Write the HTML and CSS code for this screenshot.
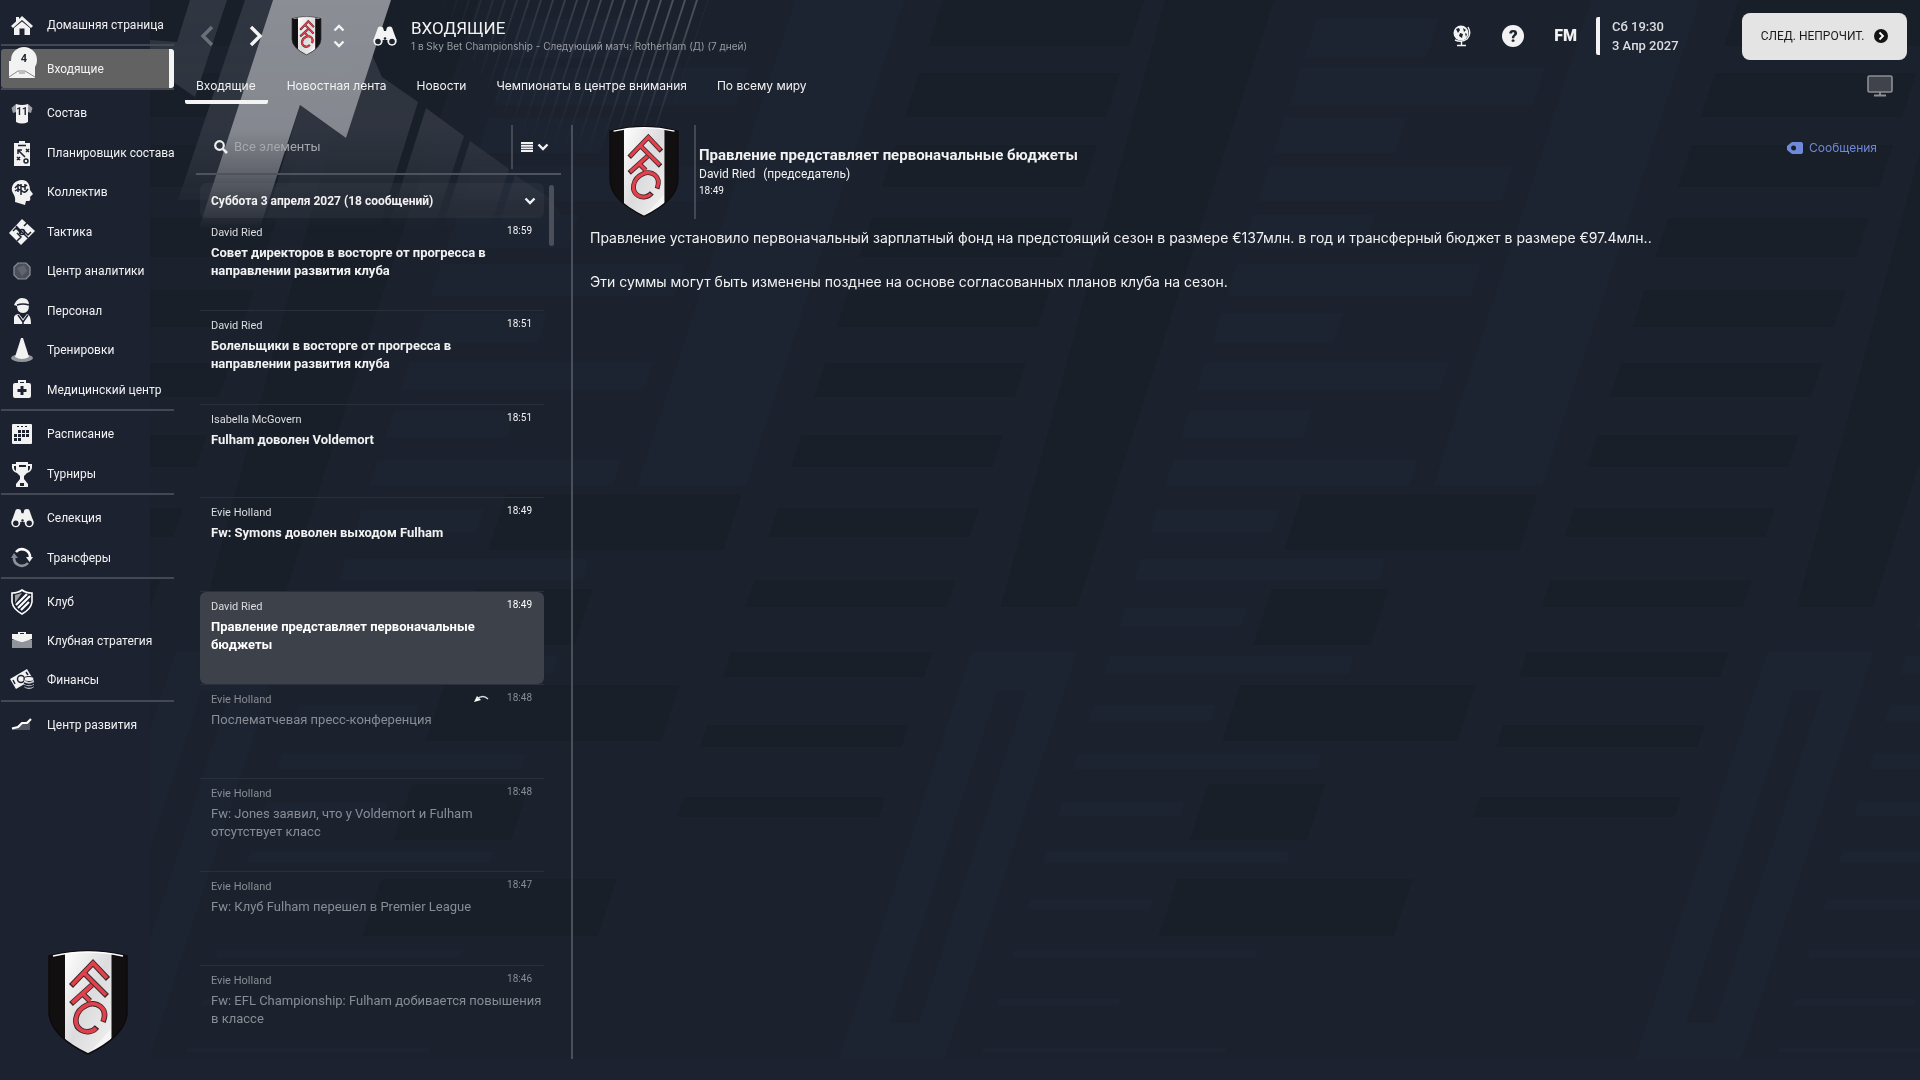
FILE: index.html
```html
<!DOCTYPE html>
<html lang="ru">
<head>
<meta charset="utf-8">
<title>Входящие</title>
<link rel="stylesheet" href="styles.css">
</head>
<body>
<svg class="backdrop" viewBox="0 0 1920 1080" preserveAspectRatio="xMinYMin slice" aria-hidden="true">
  <defs>
    <clipPath id="patternArea"><rect x="150" y="0" width="1770" height="1060"/></clipPath>
    <linearGradient id="fadeDown" x1="0" y1="0" x2="0" y2="240" gradientUnits="userSpaceOnUse">
      <stop offset="0" stop-color="#fff"/><stop offset=".54" stop-color="#fff" stop-opacity=".95"/><stop offset=".72" stop-color="#fff" stop-opacity=".62"/><stop offset=".83" stop-color="#fff" stop-opacity=".28"/><stop offset=".96" stop-color="#fff" stop-opacity="0"/>
    </linearGradient>
    <linearGradient id="lineFade" x1="430" y1="0" x2="640" y2="-60" gradientUnits="userSpaceOnUse">
      <stop offset="0" stop-color="#000"/><stop offset="1" stop-color="#fff"/>
    </linearGradient>
    <linearGradient id="lineDown" x1="0" y1="0" x2="0" y2="160" gradientUnits="userSpaceOnUse">
      <stop offset="0" stop-color="#fff" stop-opacity=".22"/><stop offset="1" stop-color="#fff" stop-opacity="0"/>
    </linearGradient>
    <mask id="fade" maskUnits="userSpaceOnUse" x="0" y="0" width="1920" height="240"><rect width="1920" height="240" fill="url(#fadeDown)"/></mask>
    <mask id="fadeLeft" maskUnits="userSpaceOnUse" x="380" y="0" width="400" height="240"><rect x="380" width="400" height="240" fill="url(#lineFade)"/></mask>
    <pattern id="thinLines" width="12" height="240" patternUnits="userSpaceOnUse"><rect width="2" height="240" fill="url(#lineDown)"/></pattern>
    <g id="tile">
      <g class="shade">
        <path d="M943 0h201v46h-201zM943 73h201v44h-201zM943 145h201v42h-201zM943 218h201v39h-201zM943 290h201v37h-201zM943 363h201v34h-201zM943 435h201v32h-201zM943 508h201v29h-201zM943 580h201v27h-201zM943 652h201v25h-201zM943 725h201v22h-201zM943 797h201v20h-201z"/>
        <path d="M1165 0H1274V607H1198z"/>
        <path d="M1463 494h235v56h-235zM1463 589h117v56h-117zM1463 685h235v56h-235zM1463 784h117v56h-117zM1463 879h235v57h-235z"/>
      </g>
      <g class="tint">
        <path d="M795 0h109v485h-109z"/>
        <path fill-rule="evenodd" d="M1183 652h106v408h-106zM1222 691v332h29v-332z"/>
        <path d="M1323 19h122v39h-122zM1323 68h244v38h-244zM1323 117h122v36h-122zM1323 166h244v35h-244zM1323 215h122v33h-122zM1323 264h244v32h-244zM1323 313h122v30h-122zM1323 362h244v28h-244zM1323 411h122v26h-122zM1323 460h244v25h-244zM1323 509h122v23h-122zM1323 559h244v21h-244zM1323 608h122v19h-122zM1323 656h244v18h-244zM1323 705h122v17h-122zM1323 754h244v15h-244zM1323 803h122v13h-122zM1323 852h244v11h-244zM1323 900h122v9h-122zM1323 950h244v7h-244zM1323 999h122v6h-122zM1323 1048h244v4h-244z"/>
      </g>
    </g>
    <symbol id="crest" viewBox="-2 -2 82 108">
      <clipPath id="shieldClip"><path d="M0 5Q39-5 78 5V61Q78 84 39 103Q0 84 0 61Z"/></clipPath>
      <linearGradient id="silver" x1="0" y1="0" x2="1" y2="1"><stop offset="0" stop-color="#fff"/><stop offset=".5" stop-color="#dcdcde"/><stop offset="1" stop-color="#f2f2f2"/></linearGradient>
      <g clip-path="url(#shieldClip)">
        <rect width="78" height="104" fill="#120f11"/>
        <rect x="16" width="46.500" height="104" fill="url(#silver)"/>
        <path d="M39 103L62 90V78Z" fill="#fff" opacity=".5"/>
      </g>
      <path d="M0 5Q39-5 78 5V61Q78 84 39 103Q0 84 0 61Z" fill="none" stroke="#0d0b0d" stroke-width="1.500"/>
      <path d="M4 5Q39-3 74 5" fill="none" stroke="#fff" stroke-width="1.500"/>
      <g fill="none" stroke-linejoin="miter">
        <path stroke="#3a2529" stroke-width="5.600" d="M22 35L44 12L59 28M35 22L58 45M22 53L43 34M34 43L41 50M54 71C60 56 46 50 38 54C25 60 24 74 32 79C37 82 44 81 48 76"/>
        <path stroke="#e0414a" stroke-width="3.800" d="M23 34L44 12L58 27M35 22L57 44M23 52L43 34M34 43L41 50M54 70C60 56 46 50 38 54C25 60 24 74 32 79C37 82 44 81 47 77"/>
      </g>
    </symbol>
    <symbol id="binoculars" viewBox="0 0 24 20">
      <path d="M5 1.500Q7-.5 10 1.500L11 5h2l1-3.500Q17-.5 19 1.500L23.500 14H.5Z"/><circle cx="5" cy="15" r="4.700"/><circle cx="19" cy="15" r="4.700"/><path d="M9 8h6v6H9z"/>
      <circle class="hole" cx="5" cy="15.500" r="2.800"/><circle class="hole" cx="19" cy="15.500" r="2.800"/><circle class="hole" cx="12" cy="12.500" r="1.300"/>
    </symbol>
    <symbol id="chevron" viewBox="0 0 12 8"><path d="M1.500 1.500L6 6L10.500 1.500" fill="none" stroke="currentColor" stroke-width="2.400"/></symbol>
  </defs>
  <g clip-path="url(#patternArea)">
    <rect class="base" x="150" y="0" width="1770" height="1060"/>
    <g transform="skewX(-18)">
      <use href="#tile" x="-796"/><use href="#tile"/><use href="#tile" x="796"/>
    </g>
    <g mask="url(#fade)">
      <g class="band">
        <path d="M190 0H227L195 97L150 66V40L177 42Z"/>
        <path d="M245 0H273L210 200H178Z"/>
        <path d="M370 50L382 77L418 102L375 240H260L300 105L346 138Z"/>
        <path d="M426 108L464 136L430 240H384Z"/><path d="M470 141L509 169L486 240H438Z"/><path d="M515 175L548 197L562 215L540 240H494Z"/>
      </g>
      <path class="beam" d="M273 0H391L346 138L300 105L256 240H195Z"/>
    </g>
    <g mask="url(#fadeLeft)"><g transform="skewX(-18)"><path d="M440 0H708V160H580Z" fill="url(#thinLines)"/></g></g>
  </g>
</svg>

<div class="app">
  <aside class="sidebar">
    <nav class="nav" aria-label="Главное меню">
      <div class="nav-group nav-home">
        <a class="nav-item" href="#"><svg class="nav-icon" viewBox="0 0 26 26"><path d="M13 4L24 14L22 16L13 8L4 16L2 14L7 9.500V5h3v2Z"/><path d="M5 16L13 9.500L21 16V23H15.500V16.500H10.500V23H5Z"/></svg><span>Домашняя страница</span></a>
      </div>
      <div class="nav-group">
        <a class="nav-item active" href="#"><svg class="nav-icon mail" viewBox="0 0 26 32"><path d="M0 14H26V31H0Z"/><circle cx="15" cy="13" r="13"/><path d="M0 30L9 24H16L26 30M10 26H16" fill="none" stroke="#888" stroke-width="1"/><text x="15" y="15" text-anchor="middle">4</text></svg><span>Входящие</span></a>
      </div>
      <div class="nav-group squad">
        <a class="nav-item" href="#"><svg class="nav-icon" viewBox="0 0 26 26"><path d="M7 4L2.500 8L4 13L7 12ZM19 4L23.500 8L22 13L19 12Z" opacity=".6"/><path d="M7 4Q13 6 19 4V22Q13 25 7 22Z"/><text class="number" x="13" y="15" text-anchor="middle">11</text></svg><span>Состав</span></a>
        <a class="nav-item" href="#"><svg class="nav-icon" viewBox="0 0 26 26"><path d="M5 3h5V1h6v2h5v23H5z"/><path class="ink" d="M9 5.500h8M9 10l7 7M9 14v-4h4M17 9l3 3M20 9l-3 3M8 17l3 3M11 17l-3 3"/><circle class="ink" cx="17" cy="21" r="2"/></svg><span>Планировщик состава</span></a>
        <a class="nav-item" href="#"><svg class="nav-icon" viewBox="0 0 26 26"><path d="M13 1C6 1 2 6 3 12C4 15 7 17 6 23L16 26L17 22H20Q22 21 21 18L24 15L21 11C21 5 18 1 13 1Z"/><path class="ink" d="M6 9q3-4 6-2t6-1M6 12q4-3 7 0t6-2M12 5v11M16 5v6M9 5v8"/></svg><span>Коллектив</span></a>
        <a class="nav-item" href="#"><svg class="nav-icon" viewBox="0 0 26 26"><path d="M13 0L26 12L12 26L0 14Z"/><path class="ink" d="M7 7L19 19M4 12l3-3l5 5M11 19l-3 3M22 13l-3 3l-5-5M15 7l3-3M9 21l3-3l-4-4"/><circle class="ink" cx="13" cy="13" r="2.500"/></svg><span>Тактика</span></a>
        <a class="nav-item" href="#"><svg class="nav-icon" viewBox="0 0 26 26"><path d="M9 5H17L21 9V17L17 21H9L5 17V9Z" fill="#4b505b" stroke="#8d9097" stroke-width="1.200"/><path d="M8 10L15 7L18 13L13 18Z" fill="#5f646e"/></svg><span>Центр аналитики</span></a>
        <a class="nav-item" href="#"><svg class="nav-icon" viewBox="0 0 26 26"><path d="M6 5Q9 0 13 0Q20 0 20 7Q20 15 14 15Q8 15 8 8L5 7Z"/><path d="M5 26V19Q6 16 10 16L14 21L18 16Q22 17 22 26Z"/><path class="ink" d="M8 7q6-2 12 0M9 17l5 7l5-7M14 24v2"/></svg><span>Персонал</span></a>
        <a class="nav-item" href="#"><svg class="nav-icon" viewBox="0 0 26 26"><ellipse cx="13" cy="21" rx="11" ry="4" opacity=".55"/><path d="M12 1H14L20 20Q13 24 6 20Z"/></svg><span>Тренировки</span></a>
        <a class="nav-item" href="#"><svg class="nav-icon" viewBox="0 0 26 26"><path fill-rule="evenodd" d="M9 6V3H17V6H20Q22 6 22 8V19Q22 21 20 21H6Q4 21 4 19V8Q4 6 6 6ZM11 6H15V5H11ZM11.500 9V12H8.500V15H11.500V18H14.500V15H17.500V12H14.500V9Z"/></svg><span>Медицинский центр</span></a>
      </div>
      <div class="nav-group pair">
        <a class="nav-item" href="#"><svg class="nav-icon" viewBox="0 0 26 26"><rect x="3" y="3" width="20" height="20" rx="1"/><path class="hole" d="M8 5h2v1H8zM12 5h2v1h-2zM16 5h2v1h-2zM9 9h3v3H9zM13 9h3v3h-3zM17 9h3v3h-3zM5 13h3v3H5zM9 13h3v3H9zM13 13h3v3h-3zM17 13h3v3h-3zM5 17h3v3H5zM9 17h3v3H9z"/></svg><span>Расписание</span></a>
        <a class="nav-item" href="#"><svg class="nav-icon" viewBox="0 0 26 26"><path fill-rule="evenodd" d="M7 1H19V3H23V7Q22 11 18 12L15 15V18L19 23V26H7V23L11 18V15L8 12Q4 11 3 7V3H7ZM5 5V7Q5 9 7 10V5ZM21 5V7Q21 9 19 10V5ZM10 4V6H17V4ZM11 22V25H15V22Z"/></svg><span>Турниры</span></a>
      </div>
      <div class="nav-group pair">
        <a class="nav-item" href="#"><svg class="nav-icon" viewBox="0 0 26 26"><use href="#binoculars" x="2" y="3" width="23" height="20"/></svg><span>Селекция</span></a>
        <a class="nav-item" href="#"><svg class="nav-icon" viewBox="0 0 26 26"><path d="M7 7A8 8 0 0 1 21 13" fill="none" stroke="#fff" stroke-width="2.600"/><path d="M17 12H24L20.500 17Z"/><g opacity=".5"><path d="M19 18A8 8 0 0 1 5 12" fill="none" stroke="#fff" stroke-width="2.600"/><path d="M2 13H9L5 8Z"/></g></svg><span>Трансферы</span></a>
      </div>
      <div class="nav-group trio">
        <a class="nav-item" href="#"><svg class="nav-icon" viewBox="0 0 26 26"><path d="M3 4Q9 4 13 1Q17 4 23 4V13Q22 20 13 25Q4 20 3 13Z" fill="none" stroke="#fff" stroke-width="1.600"/><path d="M6 6L13 4L6 14Z" opacity=".6"/><path d="M7 16L18 5M9 19L21 7M12 21L20 13" stroke="#fff" stroke-width="2.200"/></svg><span>Клуб</span></a>
        <a class="nav-item" href="#"><svg class="nav-icon" viewBox="0 0 26 26"><path d="M3 12H23V20H3Z" opacity=".55"/><path fill-rule="evenodd" d="M9 6V4H17V6H23V11L14 14H12L3 11V6ZM11 6H15V5H11Z"/></svg><span>Клубная стратегия</span></a>
        <a class="nav-item" href="#"><svg class="nav-icon" viewBox="0 0 26 26"><path d="M1 12L18 2L24 12L7 22Z"/><circle class="ink" cx="12" cy="12" r="3.500"/><path class="ink" d="M4 13l2 4M17 5l2 3"/><ellipse cx="20" cy="12" rx="5" ry="2.500" stroke="#1c2230"/><path d="M15 13Q20 17 25 13V20Q20 24 15 20Z" opacity=".8"/><path class="ink" d="M15 16q5 3 10 0M15 18.500q5 3 10 0"/></svg><span>Финансы</span></a>
      </div>
      <div class="nav-group">
        <a class="nav-item" href="#"><svg class="nav-icon" viewBox="0 0 26 26"><path d="M3 17L9 16L14 11L21 8V18H3Z" opacity=".25"/><path d="M3 16.500L9 15L13 11L18 11L22 7" fill="none" stroke="#fff" stroke-width="2.200"/></svg><span>Центр развития</span></a>
      </div>
    </nav>
    <svg class="club-crest" role="img" aria-label="Fulham"><use href="#crest"/></svg>
  </aside>

  <div class="page">
    <header class="topbar">
      <div class="history">
        <button class="icon-btn faded" aria-label="Назад"><svg width="14" height="22" viewBox="0 0 14 22"><path d="M12 2L3 11L12 20" fill="none" stroke="currentColor" stroke-width="3.400"/></svg></button>
        <button class="icon-btn" aria-label="Вперёд"><svg width="14" height="22" viewBox="0 0 14 22"><path d="M2 2L11 11L2 20" fill="none" stroke="currentColor" stroke-width="3.400"/></svg></button>
      </div>
      <svg class="mini-crest" role="img" aria-label="Fulham"><use href="#crest"/></svg>
      <div class="switcher">
        <button class="icon-btn" aria-label="Предыдущий"><svg class="flip" width="12" height="8"><use href="#chevron"/></svg></button>
        <button class="icon-btn" aria-label="Следующий"><svg width="12" height="8"><use href="#chevron"/></svg></button>
      </div>
      <button class="icon-btn scout" aria-label="Поиск"><svg width="24" height="20"><use href="#binoculars"/></svg></button>
      <div class="heading">
        <h1>ВХОДЯЩИЕ</h1>
        <p>1 в Sky Bet Championship - Следующий матч: Rotherham (Д) (7 дней)</p>
      </div>
      <div class="tools">
        <button class="icon-btn" aria-label="Мир"><svg width="20" height="22" viewBox="0 0 20 22"><circle cx="9" cy="8" r="7.500"/><path d="M16 2Q20 9 15 14Q10 18 3 15M9.500 16V20M5 20.500H14" fill="none" stroke="currentColor" stroke-width="1.400"/><path class="hole" d="M4 4l3-1l1 2l-2 3zM11 3l3 2l-2 2zM8 8l3 1l-1 4l-3-2zM13 8l2 1l-1 3z"/></svg></button>
        <button class="help" aria-label="Справка">?</button>
        <button class="fm">FM</button>
      </div>
      <div class="clock"><span>Сб 19:30</span><span>3 Апр 2027</span></div>
      <button class="next">СЛЕД. НЕПРОЧИТ.<svg width="14" height="14" viewBox="0 0 14 14"><circle cx="7" cy="7" r="7" fill="#141414"/><path d="M5.500 3.500L9 7L5.500 10.500" fill="none" stroke="#fff" stroke-width="1.800"/></svg></button>
    </header>

    <div class="tabbar">
      <nav class="tabs" aria-label="Разделы">
        <a class="tab current" href="#">Входящие</a>
        <a class="tab" href="#">Новостная лента</a>
        <a class="tab" href="#">Новости</a>
        <a class="tab" href="#">Чемпионаты в центре внимания</a>
        <a class="tab" href="#">По всему миру</a>
      </nav>
      <button class="icon-btn" aria-label="Экран"><svg width="26" height="22" viewBox="0 0 26 22"><rect x="1" y="1" width="24" height="16" rx="1.500" fill="#3f434c" stroke="#8d8f93" stroke-width="1.600"/><path d="M13 17V20M7 20.500H19" stroke="#8d8f93" stroke-width="1.800"/></svg></button>
    </div>

    <main class="content">
      <section class="inbox" aria-label="Список сообщений">
        <div class="search">
          <label for="q" aria-label="Поиск сообщений"><svg width="14" height="14" viewBox="0 0 14 14"><circle cx="5.500" cy="5.500" r="4.300" fill="none" stroke="#eee" stroke-width="2.200"/><path d="M8.800 8.800L13 13" stroke="#eee" stroke-width="2.600"/></svg></label>
          <input id="q" type="text" placeholder="Все элементы">
          <button class="filter" aria-label="Фильтр"><svg width="12" height="10" viewBox="0 0 12 10"><path d="M0 1H12M0 3.700H12M0 6.400H12M0 9H12" stroke="currentColor" stroke-width="1.900"/></svg><svg width="12" height="8"><use href="#chevron"/></svg></button>
        </div>
        <div class="scroller">
          <div class="feed">
            <button class="day"><span>Суббота 3 апреля 2027 (18 сообщений)</span><svg width="12" height="8"><use href="#chevron"/></svg></button>
            <ul class="messages">
              <li><a class="msg" href="#"><span class="from">David Ried</span><time>18:59</time><strong>Совет директоров в восторге от прогресса в направлении развития клуба</strong></a></li>
              <li><a class="msg" href="#"><span class="from">David Ried</span><time>18:51</time><strong>Болельщики в восторге от прогресса в направлении развития клуба</strong></a></li>
              <li><a class="msg" href="#"><span class="from">Isabella McGovern</span><time>18:51</time><strong>Fulham доволен Voldemort</strong></a></li>
              <li><a class="msg" href="#"><span class="from">Evie Holland</span><time>18:49</time><strong>Fw: Symons доволен выходом Fulham</strong></a></li>
              <li><a class="msg selected" href="#"><span class="from">David Ried</span><time>18:49</time><strong>Правление представляет первоначальные бюджеты</strong></a></li>
              <li><a class="msg read" href="#"><span class="from">Evie Holland</span><svg class="reply" width="16" height="8" viewBox="0 0 16 8"><path d="M0 7L3 1L7 5Z" fill="#fff"/><path d="M3 4Q9-1 14 4" fill="none" stroke="#ddd" stroke-width="1.500"/></svg><time>18:48</time><strong>Послематчевая пресс-конференция</strong></a></li>
              <li><a class="msg read" href="#"><span class="from">Evie Holland</span><time>18:48</time><strong>Fw: Jones заявил, что у Voldemort и Fulham отсутствует класс</strong></a></li>
              <li><a class="msg read" href="#"><span class="from">Evie Holland</span><time>18:47</time><strong>Fw: Клуб Fulham перешел в Premier League</strong></a></li>
              <li><a class="msg read" href="#"><span class="from">Evie Holland</span><time>18:46</time><strong>Fw: EFL Championship: Fulham добивается повышения в классе</strong></a></li>
            </ul>
          </div>
          <div class="scrollbar"></div>
        </div>
      </section>

      <article class="reader">
        <header class="mail-head">
          <svg class="mail-crest" role="img" aria-label="Fulham"><use href="#crest"/></svg>
          <div class="mail-meta">
            <h2>Правление представляет первоначальные бюджеты</h2>
            <p class="author"><span>David Ried</span><span>(председатель)</span></p>
            <time>18:49</time>
          </div>
          <a class="tag" href="#"><svg width="16" height="12" viewBox="0 0 16 12"><path fill-rule="evenodd" d="M5 0H14Q16 0 16 2V10Q16 12 14 12H5L0 8V4ZM6.500 3.500A2.500 2.500 0 1 0 6.600 8.500A2.500 2.500 0 1 0 6.500 3.500Z"/></svg>Сообщения</a>
        </header>
        <div class="mail-body">
          <p>Правление установило первоначальный зарплатный фонд на предстоящий сезон в размере €137млн. в год и трансферный бюджет в размере €97.4млн..</p>
          <p>Эти суммы могут быть изменены позднее на основе согласованных планов клуба на сезон.</p>
        </div>
      </article>
    </main>
  </div>
</div>
</body>
</html>
```
FILE: styles.css
```css
* { box-sizing: border-box; }

body {
  margin: 0;
  min-height: 100vh;
  background: #1c2230;
  color: #f2f2f3;
  font-family: Roboto, "Noto Sans", sans-serif;
  font-size: 13px;
  line-height: 18px;
}

h1, h2, p, ul { margin: 0; padding: 0; }
ul { list-style: none; }
a { color: inherit; text-decoration: none; }
button { border: 0; padding: 0; background: none; color: inherit; font: inherit; cursor: pointer; }
svg { display: block; fill: currentColor; flex: none; }

.backdrop { position: fixed; inset: 0; width: 100%; height: 100%; z-index: -1; }
.base { fill: #1c222d; }
.shade { fill: #191f29; }
.tint { fill: #1d2431; }
.band { fill: #303641; }
.beam { fill: #8b8e95; }
.hole { fill: #1c2230; }
.ink { fill: none; stroke: #1c2230; stroke-width: 1.5px; }

.app { display: flex; min-height: 100vh; }

/* Sidebar */
.sidebar {
  display: flex;
  flex-direction: column;
  justify-content: space-between;
  flex: none;
  width: 175px;
  padding: 5px 0 23px 1px;
}
.nav-group { display: grid; grid-auto-rows: 1fr; margin-right: 1px; padding-top: 3px; border-top: 2px solid #434853; }
.nav-home { padding-top: 0; border-top: 0; }
.squad { height: 321px; }
.pair { height: 84px; }
.trio { height: 123px; }
.nav-item { display: flex; align-items: center; gap: 12px; min-height: 39px; padding-left: 8px; font-size: 12px; white-space: nowrap; }
.squad .nav-item, .pair .nav-item { padding-top: 1px; }
.nav-icon { width: 26px; height: 26px; overflow: visible; }
.nav-icon text { fill: #1c2230; font-size: 11px; font-weight: 700; }
.nav-icon .number { font-size: 10px; }
.mail { height: 32px; margin-top: -12px; }
.active { height: 39px; background: #626262; border-right: 5px solid #f4f4f4; border-radius: 3px; }
.club-crest { width: 82px; height: 108px; margin-left: 46px; }

/* Top bar */
.page { display: flex; flex-direction: column; flex: 1; min-width: 0; padding: 0 13px 21px 10px; }
.topbar { display: flex; align-items: center; height: 72px; }
.icon-btn { display: block; color: #f4f4f4; }
.faded { color: #6b6f78; }
.history { display: flex; gap: 35px; padding-left: 15px; }
.mini-crest { width: 31px; height: 40px; margin-left: 28px; }
.switcher { display: grid; gap: 8px; margin-left: 11px; }
.flip { transform: rotate(180deg); }
.scout { margin-left: 28px; }
.heading { flex: 1; padding-left: 14px; }
h1 { font-size: 17px; line-height: 20px; font-weight: 400; }
.heading p { color: #999da4; font: 10px/16px Inter, Roboto, sans-serif; }
.tools { display: flex; align-items: center; gap: 30px; }
.help { width: 22px; height: 22px; border-radius: 50%; background: #f2f2f2; color: #1c2230; font-size: 17px; font-weight: 900; line-height: 22px; }
.fm { font-size: 16px; font-weight: 900; }
.clock { display: grid; width: 146px; margin-left: 19px; padding-left: 12px; border-left: 4px solid #f4f4f4; border-radius: 2px; color: #dcdde0; font-size: 13px; font-weight: 500; line-height: 19px; }
.next { display: flex; align-items: center; justify-content: center; gap: 10px; width: 165px; height: 47px; border-radius: 8px; background: #e4e4e4; color: #1a1a1a; font-size: 12px; }

/* Tabs */
.tabbar { display: flex; align-items: flex-start; justify-content: space-between; height: 32px; padding: 0 14px 0 0; }
.tabbar .icon-btn { padding-top: 3px; }
.tabs { display: flex; gap: 8px; height: 32px; font-family: Inter, Roboto, sans-serif; font-size: 12px; }
.tab { padding: 5px 11px 0; }
.current { padding-right: 12px; border-bottom: 4px solid #f4f4f4; border-radius: 2px; }

/* Message list */
.content { display: flex; flex: 1; padding-top: 21px; }
.inbox { display: flex; flex-direction: column; flex: none; width: 388px; padding: 0 10px 0 11px; border-right: 2px solid #4a4f59; }
.search { display: flex; align-items: center; height: 50px; padding: 0 0 5px 18px; border-bottom: 2px solid #4e535d; }
.search input { flex: 1; min-width: 0; padding: 0 6px; border: 0; outline: 0; background: none; color: #eee; font: inherit; }
.search input::placeholder { color: #a4a7ad; opacity: 1; }
.filter { display: flex; align-items: center; gap: 4px; height: 44px; padding: 0 12px 0 8px; border-left: 2px solid #434853; }
.scroller { display: flex; flex: 1; gap: 5px; padding: 8px 0 0 4px; }
.feed { display: flex; flex-direction: column; width: 344px; }
.day { display: flex; align-items: center; justify-content: space-between; height: 35px; padding: 0 8px 0 11px; border-radius: 6px; background: rgba(255, 255, 255, .04); font-size: 12px; font-weight: 700; }
.messages { display: grid; flex: 1; grid-auto-rows: 1fr; }
.messages li { display: grid; border-bottom: 1px solid #292f3b; }
.messages li:last-child { border-bottom: 0; }
.msg { display: flex; flex-wrap: wrap; align-content: flex-start; padding: 5px 0 0 11px; border-radius: 6px; }
.from { flex: 1; padding-top: 1px; font-size: 11px; color: #dcdde0; }
.msg time { margin-right: 12px; font-size: 10px; line-height: 16px; }
.msg strong { width: 100%; padding: 2px 32px 0 0; font-weight: 700; }
.selected { background: #3c414a; color: #fff; }
.read, .read .from { color: #888c94; }
.msg.read strong { padding-right: 0; font-weight: 400; }
.reply { margin: 5px 17px 0 0; }
.scrollbar { width: 5px; height: 61px; margin-top: 2px; border-radius: 3px; background: #4a4f59; }

/* Reader */
.reader { flex: 1; min-width: 0; padding-left: 17px; }
.mail-head { display: flex; }
.mail-crest { width: 74px; height: 94px; margin: 0 13px 0 17px; }
.mail-meta { flex: 1; padding: 20px 0 0 3px; border-left: 2px solid #434853; }
h2 { font-size: 15px; line-height: 20px; font-weight: 700; }
.author { display: flex; gap: 8px; font-size: 12px; }
.mail-meta time { display: block; font-size: 10px; line-height: 16px; }
.tag { display: flex; align-items: center; gap: 6px; height: 18px; margin: 14px 30px 0 0; color: #6f8ad8; font-family: Inter, Roboto, sans-serif; font-size: 12px; }
.mail-body { display: grid; gap: 22px; padding-top: 8px; font-family: Inter, Roboto, sans-serif; font-size: 14px; line-height: 22px; }
```
